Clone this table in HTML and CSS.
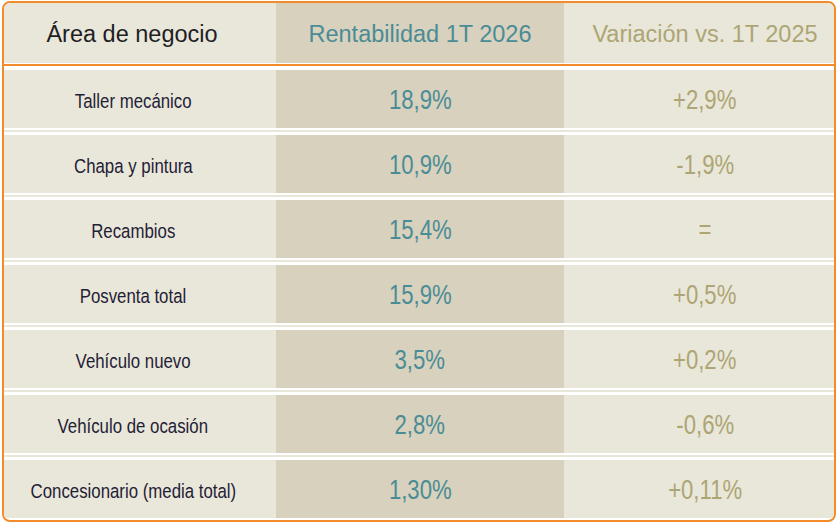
FILE: index.html
```html
<!DOCTYPE html>
<html lang="es">
<head>
<meta charset="utf-8">
<title>Rentabilidad</title>
<link rel="stylesheet" href="styles.css">
</head>
<body>
<div class="card">
  <div class="row head">
    <div class="cell c1">Área de negocio</div>
    <div class="cell c2">Rentabilidad 1T 2026</div>
    <div class="cell c3">Variación vs. 1T 2025</div>
  </div>
  <div class="hdiv"></div>
  <div class="row"><div class="cell c1"><span class="t">Taller mecánico</span></div><div class="cell c2"><span class="t">18,9%</span></div><div class="cell c3"><span class="t">+2,9%</span></div></div>
  <div class="sep"></div>
  <div class="row"><div class="cell c1"><span class="t">Chapa y pintura</span></div><div class="cell c2"><span class="t">10,9%</span></div><div class="cell c3"><span class="t">-1,9%</span></div></div>
  <div class="sep"></div>
  <div class="row"><div class="cell c1"><span class="t">Recambios</span></div><div class="cell c2"><span class="t">15,4%</span></div><div class="cell c3"><span class="t">=</span></div></div>
  <div class="sep"></div>
  <div class="row"><div class="cell c1"><span class="t">Posventa total</span></div><div class="cell c2"><span class="t">15,9%</span></div><div class="cell c3"><span class="t">+0,5%</span></div></div>
  <div class="sep"></div>
  <div class="row"><div class="cell c1"><span class="t">Vehículo nuevo</span></div><div class="cell c2"><span class="t">3,5%</span></div><div class="cell c3"><span class="t">+0,2%</span></div></div>
  <div class="sep"></div>
  <div class="row"><div class="cell c1"><span class="t">Vehículo de ocasión</span></div><div class="cell c2"><span class="t">2,8%</span></div><div class="cell c3"><span class="t">-0,6%</span></div></div>
  <div class="sep"></div>
  <div class="row"><div class="cell c1"><span class="t">Concesionario (media total)</span></div><div class="cell c2"><span class="t">1,30%</span></div><div class="cell c3"><span class="t">+0,11%</span></div></div>
</div>
</body>
</html>
```
FILE: styles.css
```css
html, body {
  margin: 0;
  padding: 0;
  background: #ffffff;
}
body {
  padding: 1px 0 0 2px;
  font-family: "Liberation Sans", Arial, sans-serif;
}
.card {
  width: 834px;
  height: 521px;
  box-sizing: border-box;
  border: 2px solid #f18b2c;
  border-radius: 8px;
  background: #ffffff;
  overflow: hidden;
  padding-bottom: 2px;
}
.row {
  display: grid;
  grid-template-columns: 272px 288px 270px;
  height: 58px;
}
.row.head {
  height: 60px;
}
.cell {
  display: flex;
  align-items: center;
  justify-content: center;
  background: #e9e7da;
  font-family: "Liberation Sans", Arial, sans-serif;
  white-space: nowrap;
}
.t {
  display: inline-block;
  transform: scaleX(0.82);
}
.c1 {
  padding-right: 14px;
  padding-top: 3px;
  color: #1f2136;
  font-size: 20.5px;
}
.c2 {
  background: #d8d1bd;
  color: #4a8c96;
  font-size: 27px;
  padding-top: 2px;
}
.c3 {
  padding-left: 12px;
  color: #ada574;
  font-size: 27px;
  padding-top: 2px;
}
.head .cell {
  font-size: 23.5px;
  padding-top: 2px;
}
.head .c1 {
  color: #1e1e24;
  padding-right: 16px;
}
.hdiv {
  height: 2px;
  border-top: 1px solid #ffffff;
  border-bottom: 4px solid #ffffff;
  background: #f18b2c;
}
.sep {
  height: 2px;
  border-top: 2px solid #ffffff;
  border-bottom: 3px solid #ffffff;
  background: #e9e7da;
}
```
